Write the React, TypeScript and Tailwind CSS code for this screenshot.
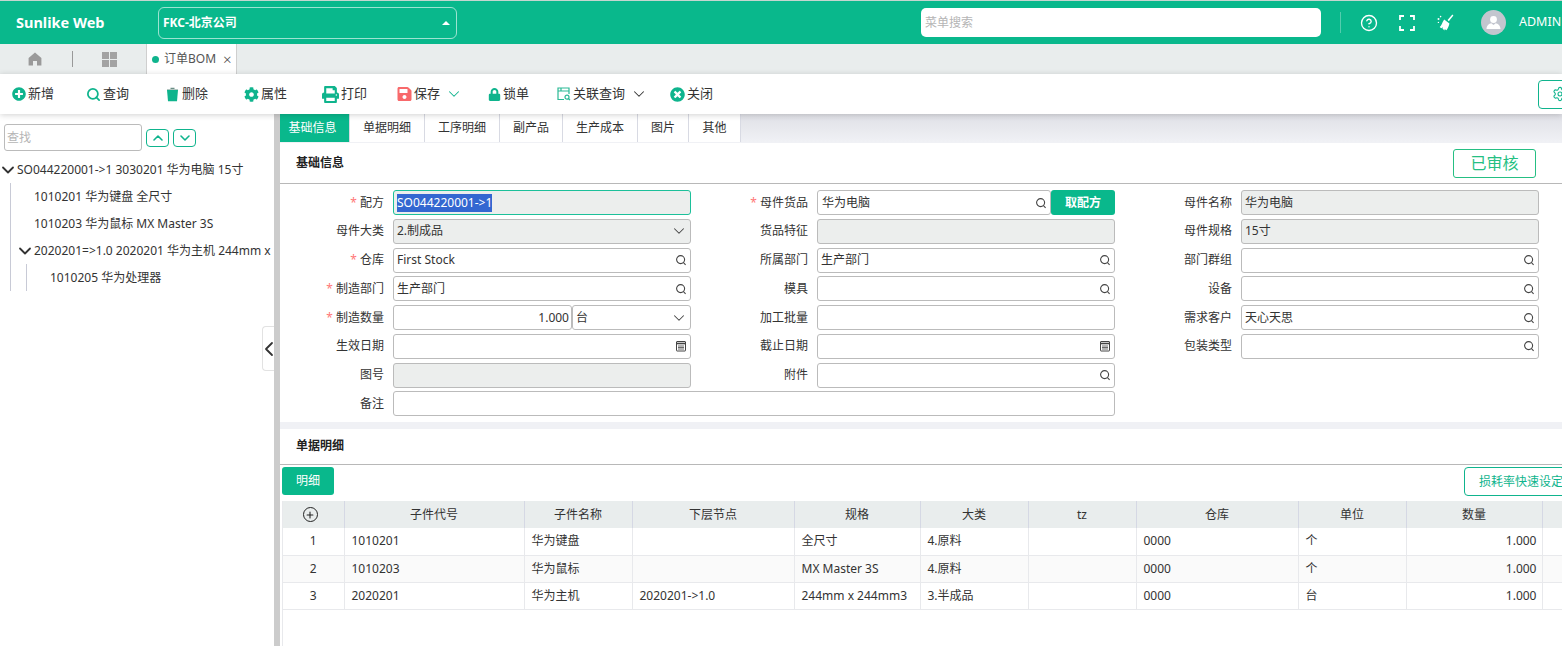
import { ReactNode } from "react";
import { ChevronDown, ChevronLeft, ChevronUp, CircleHelp, Plus, Search, Settings } from "lucide-react";
import { FaCog, FaLock, FaPlusCircle, FaPrint, FaSave, FaTimesCircle } from "react-icons/fa";

const font = { fontFamily: '"Noto Sans", "Noto Sans CJK SC", sans-serif' };

const SearchIcon = () => (
  <svg width="12" height="12" viewBox="0 0 12 12" fill="none" stroke="#444" strokeWidth="1.1" className="shrink-0">
    <circle cx="5.6" cy="5.6" r="4" />
    <path d="M8.5 8.6 10.6 10.8" />
  </svg>
);

const CalendarIcon = () => (
  <svg width="12" height="12" viewBox="0 0 12 12" fill="none" stroke="#444" className="shrink-0">
    <rect x="1.5" y="1.5" width="9" height="9.5" rx="0.5" />
    <path d="M1.5 3.5h9" strokeWidth="1.6" />
    <path d="M3 6h6M3 7.5h6M3 9h6" strokeWidth="0.8" />
  </svg>
);

const FullscreenIcon = () => (
  <svg width="16" height="16" viewBox="0 0 16 16" fill="none" stroke="white" strokeWidth="1.8">
    <path d="M1 5V1h4M11 1h4v4M15 11v4h-4M5 15H1v-4" />
  </svg>
);

const BroomIcon = () => (
  <svg width="17" height="17" viewBox="0 0 17 17" fill="white">
    <path d="M16.4 1.4 15.4.4 10.6 6l1.2 1.2z" />
    <path d="M7.2 5.6 12.4 9.4c-.4 2.2-1.5 5-3 6.8L7.6 15l.1 1.4-2.2-1.6.6-1.5-1.9 1-1.5-1.2C4.6 11.8 5 8.6 7.2 5.6z" />
    <circle cx="1.5" cy="5" r="1" />
    <circle cx="3.6" cy="2.6" r="0.8" />
    <circle cx="1.4" cy="8.4" r="0.7" />
  </svg>
);

const UserIcon = () => (
  <svg width="25" height="25" viewBox="0 0 25 25" fill="white">
    <circle cx="12.5" cy="9.5" r="3.4" />
    <path d="M5.5 19c0-3.4 2.6-5.5 4.8-5.7l2.2 1.6 2.2-1.6c2.2.2 4.8 2.3 4.8 5.7z" />
  </svg>
);

const HomeIcon = () => (
  <svg width="14" height="14" viewBox="0 0 14 14" fill="#9a9a9a">
    <path d="M7 .6 13.4 6v7.4H9V9H5v4.4H.6V6z" />
  </svg>
);

const TrashIcon = () => (
  <svg width="13" height="15" viewBox="0 0 13 15" fill="#0fb48d">
    <path d="M1 3h11l-1 11.2H2z" />
    <path d="M1 2h11v.6H1zM4.5.8h4V2h-4z" fill="#6b8f86" />
  </svg>
);

const RelatedIcon = () => (
  <svg width="14" height="14" viewBox="0 0 14 14" fill="none" stroke="#2bb995" strokeWidth="1.2">
    <path d="M7 12.5H1V1h11v6" />
    <path d="M1 4h11M4 1v3" />
    <circle cx="10" cy="10.2" r="2" />
    <path d="m11.5 11.7 1.5 1.5" />
  </svg>
);

const toolbar: { label: string; icon: ReactNode; width: string; iconBox: string; caret?: string }[] = [
  { label: "新增", icon: <FaPlusCircle size={14} color="#0fb48d" />, width: "w-[75px]", iconBox: "w-[15px]" },
  { label: "查询", icon: <Search size={15} color="#0fb48d" strokeWidth={2.8} />, width: "w-[79px]", iconBox: "w-[15px]" },
  { label: "删除", icon: <TrashIcon />, width: "w-[79px]", iconBox: "w-[15px]" },
  { label: "属性", icon: <FaCog size={15} color="#0fb48d" />, width: "w-[78px]", iconBox: "w-[15px]" },
  { label: "打印", icon: <FaPrint size={17} color="#0fb48d" />, width: "w-[75px]", iconBox: "w-[17px]" },
  { label: "保存", icon: <FaSave size={16} color="#f8696b" />, width: "w-[90px]", iconBox: "w-[15px]", caret: "#0fb48d" },
  { label: "锁单", icon: <FaLock size={13} color="#0fb48d" />, width: "w-[69px]", iconBox: "w-[14px]" },
  { label: "关联查询", icon: <RelatedIcon />, width: "w-[114px]", iconBox: "w-[15px]", caret: "#333" },
  { label: "关闭", icon: <FaTimesCircle size={15} color="#0fb48d" />, width: "w-[70px]", iconBox: "w-[15px]" },
];

const tabs = [
  { label: "基础信息", width: "w-[70px]", active: true },
  { label: "单据明细", width: "w-[75px]" },
  { label: "工序明细", width: "w-[75px]" },
  { label: "副产品", width: "w-[63px]" },
  { label: "生产成本", width: "w-[75px]" },
  { label: "图片", width: "w-[51px]" },
  { label: "其他", width: "w-[52px]" },
];

const Label = ({ text, required }: { text: string; required?: boolean }) => (
  <div className="flex h-[25px] items-center justify-end pr-[9px] text-[12px] text-[#333]">
    {required && <span className="mr-[3px] text-[#f77]">*</span>}
    {text}
  </div>
);

type FieldProps = {
  value?: string;
  disabled?: boolean;
  icon?: "search" | "date" | "caret";
  className?: string;
};

const Field = ({ value, disabled, icon, className = "" }: FieldProps) => (
  <div
    className={`flex h-[25px] items-center rounded-[3px] border border-[#bbbbbb] pl-[3px] pr-[3px] text-[12px] text-[#333] ${disabled ? "bg-[#eceeed]" : "bg-white"} ${className}`}
  >
    <span className="flex-1 truncate">{value}</span>
    {icon === "search" && <SearchIcon />}
    {icon === "date" && <CalendarIcon />}
    {icon === "caret" && <ChevronDown size={18} color="#444" strokeWidth={1.4} className="-mr-[1px]" />}
  </div>
);

const columns = [
  { title: "子件代号", width: "w-[180px]" },
  { title: "子件名称", width: "w-[108px]" },
  { title: "下层节点", width: "w-[162px]" },
  { title: "规格", width: "w-[126px]" },
  { title: "大类", width: "w-[108px]" },
  { title: "tz", width: "w-[108px]" },
  { title: "仓库", width: "w-[162px]" },
  { title: "单位", width: "w-[108px]" },
  { title: "数量", width: "w-[136px]" },
  { title: "", width: "w-[60px]" },
];

const rows = [
  ["1", "1010201", "华为键盘", "", "全尺寸", "4.原料", "", "0000", "个", "1.000", ""],
  ["2", "1010203", "华为鼠标", "", "MX Master 3S", "4.原料", "", "0000", "个", "1.000", ""],
  ["3", "2020201", "华为主机", "2020201->1.0", "244mm x 244mm3", "3.半成品", "", "0000", "台", "1.000", ""],
];

const treeText = "h-[27px] flex items-center whitespace-nowrap text-[12px] text-[#333]";

export default function App() {
  return (
    <div style={font} className="flex h-screen w-screen flex-col overflow-hidden bg-white">
      <header className="flex h-[44px] shrink-0 items-center border-t border-[#c4d6d0] bg-[#09b88c] text-white">
        <div className="w-[158px] shrink-0 pl-[16px] text-[14.5px] font-bold">Sunlike Web</div>
        <div className="flex h-[32px] w-[299px] shrink-0 items-center justify-between rounded-[6px] border border-white/60 pl-[4px] pr-[6px] text-[12px] font-bold">
          <span className="pt-[1px]">FKC-北京公司</span>
          <span className="border-x-[4px] border-b-[4px] border-x-transparent border-b-white" />
        </div>
        <div className="ml-[464px] flex h-[29px] w-[400px] shrink-0 items-center rounded-[5px] bg-white pl-[4px] text-[12px] text-[#b5b5b5]">
          菜单搜索
        </div>
        <div className="ml-[19px] h-[21px] w-px bg-white/30" />
        <CircleHelp size={18} className="ml-[19px]" strokeWidth={1.8} />
        <div className="ml-[21px]"><FullscreenIcon /></div>
        <div className="ml-[22px]"><BroomIcon /></div>
        <div className="ml-[27px] h-[25px] w-[25px] overflow-hidden rounded-full bg-[#c3c6cf]">
          <UserIcon />
        </div>
        <div className="ml-[13px] whitespace-nowrap text-[12.5px]">ADMIN</div>
      </header>

      <div className="flex h-[30px] shrink-0 items-stretch bg-[#e9eded]">
        <div className="flex w-[70px] items-center justify-center">
          <HomeIcon />
        </div>
        <div className="my-[7px] ml-[2px] w-px bg-[#999]" />
        <div className="flex w-[73px] items-center justify-center">
          <div className="grid grid-cols-2 gap-[1px]">
            <span className="h-[7px] w-[7px] bg-[#a3a3a3]" />
            <span className="h-[7px] w-[7px] bg-[#a3a3a3]" />
            <span className="h-[7px] w-[7px] bg-[#a3a3a3]" />
            <span className="h-[7px] w-[7px] bg-[#a3a3a3]" />
          </div>
        </div>
        <div className="flex w-[91px] items-center border-x border-[#cfcfcf] bg-white pl-[5px] text-[12px] text-[#555]">
          <span className="mr-[5px] h-[7px] w-[7px] rounded-full bg-[#0fb48d]" />
          订单BOM
          <span className="ml-[7px] text-[15px] font-light leading-none text-[#444]">×</span>
        </div>
      </div>

      <div className="relative z-10 flex h-[40px] shrink-0 items-center overflow-hidden bg-white pl-[11px] text-[13px] text-[#333] shadow-[0_1px_6px_rgba(0,0,0,0.18)]">
        {toolbar.map((item) => (
          <div key={item.label} className={`flex shrink-0 items-center gap-[2px] ${item.width}`}>
            <span className={`flex justify-center ${item.iconBox}`}>{item.icon}</span>
            <span>{item.label}</span>
            {item.caret && <ChevronDown size={18} color={item.caret} strokeWidth={1.4} className="ml-[3px]" />}
          </div>
        ))}
        <div className="ml-[798px] flex h-[29px] w-[60px] shrink-0 items-center rounded-[4px] border border-[#0fb48d] pl-[13px]">
          <Settings size={16} color="#0fb48d" strokeWidth={1.6} />
        </div>
      </div>

      <div className="flex min-h-0 flex-1">
        <aside className="relative w-[274px] shrink-0 bg-white">
          <div className="flex items-center pl-[4px] pt-[10px]">
            <div className="flex h-[27px] w-[138px] items-center rounded-[3px] border border-[#bbb] pl-[2px] text-[12px] text-[#b5b5b5]">
              查找
            </div>
            <button className="ml-[4px] flex h-[18px] w-[23px] items-center justify-center rounded-[4px] border border-[#0fb48d]">
              <ChevronUp size={16} color="#0fb48d" strokeWidth={2.4} />
            </button>
            <button className="ml-[4px] flex h-[18px] w-[23px] items-center justify-center rounded-[4px] border border-[#0fb48d]">
              <ChevronDown size={16} color="#0fb48d" strokeWidth={2.4} />
            </button>
          </div>
          <div className="mt-[5px] overflow-hidden">
            <div className={treeText}>
              <ChevronDown size={20} strokeWidth={2.2} className="-mx-[2px] mr-[-1px] shrink-0" color="#333" />
              SO044220001-&gt;1 3030201 华为电脑 15寸
            </div>
            <div className="ml-[10px] border-l border-[#c8cad6]">
              <div className={`${treeText} pl-[23px]`}>1010201 华为键盘 全尺寸</div>
              <div className={`${treeText} pl-[23px]`}>1010203 华为鼠标 MX Master 3S</div>
              <div className={`${treeText} overflow-hidden pl-[6px]`}>
                <ChevronDown size={20} strokeWidth={2.2} className="-mx-[2px] mr-[-1px] shrink-0" color="#333" />
                2020201=&gt;1.0 2020201 华为主机 244mm x
              </div>
              <div className="ml-[15px] border-l border-[#c8cad6]">
                <div className={`${treeText} pl-[23px]`}>1010205 华为处理器</div>
              </div>
            </div>
          </div>
          <div className="absolute right-0 top-[212px] flex h-[45px] w-[12px] items-center justify-center rounded-l-[4px] border border-r-0 border-[#e2e2e2] bg-white">
            <ChevronLeft size={24} color="#333" strokeWidth={1.8} className="shrink-0" />
          </div>
        </aside>
        <div className="w-[6px] shrink-0 bg-[#cccccc]" />

        <main className="flex min-w-0 flex-1 flex-col bg-[#f0f1f5]">
          <div className="flex h-[28px] shrink-0 bg-gradient-to-b from-[#dfe0e6] to-[#f0f1f5]">
            {tabs.map((tab) => (
              <div
                key={tab.label}
                className={`flex items-center justify-center border-r border-[#d8dae3] text-[12px] ${tab.width} ${tab.active ? "bg-[#09b88c] pr-[4px] text-white" : "bg-white text-[#333]"}`}
              >
                {tab.label}
              </div>
            ))}
          </div>

          <section className="mt-[1px] h-[279px] shrink-0 bg-white">
            <div className="flex h-[41px] items-center justify-between border-b border-[#b8b8b8] pl-[16px] pr-[26px]">
              <span className="text-[12px] font-bold text-[#222]">基础信息</span>
              <span className="flex h-[29px] w-[83px] items-center justify-center rounded-[3px] border border-[#25bf83] text-[16px] text-[#25bf83]">
                已审核
              </span>
            </div>
            <div className="mt-[6px] grid grid-cols-[113px_298px_126px_298px_126px_298px] auto-rows-[28.75px]">
              <Label text="配方" required />
              <div className="flex h-[25px] items-center rounded-[3px] border border-[#1cc09a] bg-[#eceeed] pl-[3px] text-[12px]">
                <span className="bg-[#3367d1] text-white">SO044220001-&gt;1</span>
              </div>
              <Label text="母件货品" required />
              <div className="flex">
                <Field value="华为电脑" icon="search" className="w-[234px] pl-[4px]" />
                <button className="h-[25px] w-[64px] rounded-[3px] bg-[#09b88c] text-[12px] font-bold text-white">取配方</button>
              </div>
              <Label text="母件名称" />
              <Field value="华为电脑" disabled />

              <Label text="母件大类" />
              <Field value="2.制成品" disabled icon="caret" />
              <Label text="货品特征" />
              <Field disabled />
              <Label text="母件规格" />
              <Field value="15寸" disabled />

              <Label text="仓库" required />
              <Field value="First Stock" icon="search" />
              <Label text="所属部门" />
              <Field value="生产部门" icon="search" />
              <Label text="部门群组" />
              <Field icon="search" />

              <Label text="制造部门" required />
              <Field value="生产部门" icon="search" />
              <Label text="模具" />
              <Field icon="search" />
              <Label text="设备" />
              <Field icon="search" />

              <Label text="制造数量" required />
              <div className="flex">
                <div className="flex h-[25px] w-[179px] items-center justify-end rounded-[3px] border border-[#bbb] pr-[2px] text-[12px] text-[#333]">1.000</div>
                <Field value="台" icon="caret" className="w-[119px]" />
              </div>
              <Label text="加工批量" />
              <Field />
              <Label text="需求客户" />
              <Field value="天心天思" icon="search" />

              <Label text="生效日期" />
              <Field icon="date" />
              <Label text="截止日期" />
              <Field icon="date" />
              <Label text="包装类型" />
              <Field icon="search" />

              <Label text="图号" />
              <Field disabled />
              <Label text="附件" />
              <Field icon="search" />
              <div className="col-span-2" />

              <Label text="备注" />
              <Field className="col-span-3" />
            </div>
          </section>

          <section className="mt-[7px] min-h-0 flex-1 overflow-hidden bg-white">
            <div className="flex h-[36px] items-center border-b border-[#b8b8b8] pb-[2px] pl-[16px] text-[12px] font-bold text-[#222]">
              单据明细
            </div>
            <div className="flex items-start pl-[2px] pt-[2px]">
              <button className="h-[28px] w-[52px] shrink-0 rounded-[3px] bg-[#09b88c] text-[12px] text-white">明细</button>
              <button className="ml-[1130px] h-[29px] w-[120px] shrink-0 rounded-[4px] border border-[#0fb48d] pl-[1px] text-left indent-[13px] text-[12px] text-[#0fb48d]">
                损耗率快速设定
              </button>
            </div>
            <div className="ml-[2px] mt-[5px] h-[200px] w-[1400px] border-l border-[#e8e9ec]">
              <table className="table-fixed border-collapse text-[12px] text-[#333]">
                <thead>
                  <tr className="h-[27px] bg-[#e9eded]">
                    <th className="w-[61px] border-r border-[#d5d8e4] font-normal">
                      <span className="flex justify-center pr-[6px]">
                        <span className="flex h-[15px] w-[15px] items-center justify-center rounded-full border-[1.5px] border-[#222]">
                          <Plus size={10} strokeWidth={2.5} color="#222" />
                        </span>
                      </span>
                    </th>
                    {columns.map((col, i) => (
                      <th key={i} className={`${col.width} border-r border-[#d5d8e4] font-normal`}>{col.title}</th>
                    ))}
                  </tr>
                </thead>
                <tbody>
                  {rows.map((row, i) => (
                    <tr key={row[0]} className={`h-[27px] border-b border-[#e8e9ec] ${i === 1 ? "bg-[#fafafa]" : "bg-white"}`}>
                      {row.map((cell, j) => (
                        <td
                          key={j}
                          className={`border-r border-[#e8e9ec] whitespace-nowrap ${j === 0 ? "text-center" : j === 9 ? "pr-[5px] text-right" : "pl-[7px]"}`}
                        >
                          {cell}
                        </td>
                      ))}
                    </tr>
                  ))}
                </tbody>
              </table>
            </div>
          </section>
        </main>
      </div>
    </div>
  );
}
